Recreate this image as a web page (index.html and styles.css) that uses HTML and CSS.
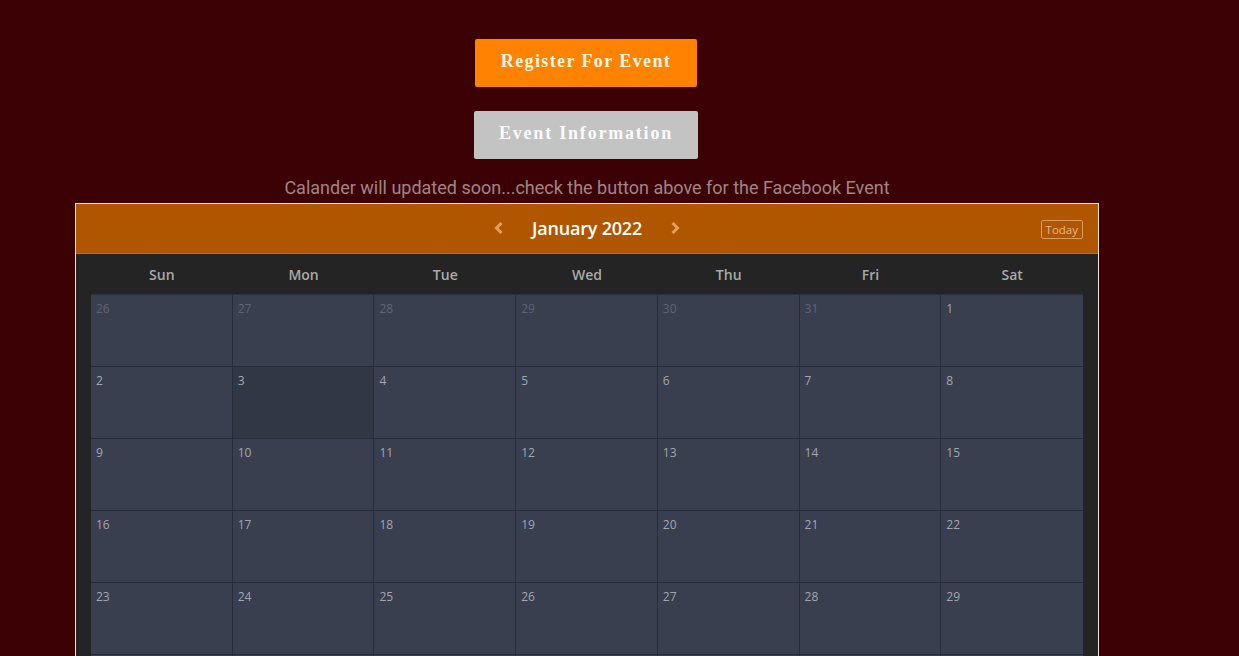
FILE: index.html
```html
<!DOCTYPE html>
<html>
<head>
<meta charset="utf-8">
<link rel="stylesheet" href="styles.css">
</head>
<body>
<div class="page">
  <div class="actions">
    <a class="btn btn-register">Register For Event</a>
    <a class="btn btn-info">Event Information</a>
  </div>
  <p class="note">Calander will updated soon...check the button above for the Facebook Event</p>
  <div class="calendar">
    <div class="cal-head">
      <div class="nav">
        <span class="arrow"><svg width="10" height="14" viewBox="0 0 10 14"><polyline points="7.5,2 2.5,7 7.5,12" fill="none" stroke="currentColor" stroke-width="3"/></svg></span>
        <span class="month">January 2022</span>
        <span class="arrow"><svg width="10" height="14" viewBox="0 0 10 14"><polyline points="2.5,2 7.5,7 2.5,12" fill="none" stroke="currentColor" stroke-width="3"/></svg></span>
      </div>
      <span class="today">Today</span>
    </div>
    <div class="cal-body">
      <div class="dow"><span>Sun</span><span>Mon</span><span>Tue</span><span>Wed</span><span>Thu</span><span>Fri</span><span>Sat</span></div>
      <div class="grid">
        <div class="cell other">26</div><div class="cell other">27</div><div class="cell other">28</div><div class="cell other">29</div><div class="cell other">30</div><div class="cell other">31</div><div class="cell">1</div>
        <div class="cell">2</div><div class="cell current">3</div><div class="cell">4</div><div class="cell">5</div><div class="cell">6</div><div class="cell">7</div><div class="cell">8</div>
        <div class="cell">9</div><div class="cell">10</div><div class="cell">11</div><div class="cell">12</div><div class="cell">13</div><div class="cell">14</div><div class="cell">15</div>
        <div class="cell">16</div><div class="cell">17</div><div class="cell">18</div><div class="cell">19</div><div class="cell">20</div><div class="cell">21</div><div class="cell">22</div>
        <div class="cell">23</div><div class="cell">24</div><div class="cell">25</div><div class="cell">26</div><div class="cell">27</div><div class="cell">28</div><div class="cell">29</div>
        <div class="cell">30</div><div class="cell">31</div><div class="cell other">1</div><div class="cell other">2</div><div class="cell other">3</div><div class="cell other">4</div><div class="cell other">5</div>
      </div>
    </div>
  </div>
</div>
</body>
</html>
```

FILE: styles.css
```css
html, body {
  margin: 0;
  padding: 0;
  background: #3b0104;
}
body {
  font-family: "Open Sans", sans-serif;
}
.page {
  width: 1024px;
  margin-left: 75px;
  padding-top: 39px;
}
.actions {
  display: flex;
  flex-direction: column;
  align-items: center;
  gap: 24px;
}
.btn {
  display: flex;
  align-items: center;
  justify-content: center;
  height: 48px;
  border-radius: 2px;
  font-family: "Liberation Serif", serif;
  font-weight: bold;
  font-size: 18px;
  letter-spacing: 1.4px;
  color: #fff7ea;
  box-sizing: border-box;
  padding-bottom: 3px;
}
.btn-register {
  width: 222px;
  margin-right: 2px;
  background: #ff8300;
}
.btn-info {
  width: 224px;
  margin-right: 2px;
  background: #c3c3c3;
  color: #fbfbfb;
  letter-spacing: 1.8px;
}
.note {
  margin: 18px 0 4px;
  text-align: center;
  font-family: Roboto, sans-serif;
  font-size: 18px;
  line-height: 22px;
  color: #a08486;
}
.calendar {
  border: 1px solid #f3e6dc;
  border-bottom: none;
}
.cal-head {
  position: relative;
  height: 49px;
  background: #b05600;
  border-bottom: 1px solid #c46a1c;
  display: flex;
  align-items: center;
  justify-content: center;
}
.nav {
  display: flex;
  align-items: center;
  gap: 28px;
  padding-bottom: 2px;
}
.arrow {
  color: #e0a064;
  display: flex;
}
.month {
  font-weight: 600;
  font-size: 18px;
  color: #ffffff;
  letter-spacing: -0.2px;
}
.today {
  position: absolute;
  right: 15px;
  top: 16px;
  height: 17px;
  padding: 0 4px;
  border: 1px solid #d99a60;
  border-radius: 2px;
  font-size: 11.5px;
  line-height: 17px;
  color: #eab68a;
}
.cal-body {
  background: #242424;
  padding: 0 15px;
}
.dow {
  display: grid;
  grid-template-columns: repeat(7, 1fr);
  height: 40px;
  align-items: center;
}
.dow span {
  text-align: center;
  font-weight: 600;
  font-size: 14px;
  color: #a9a9a9;
}
.grid {
  display: grid;
  grid-template-columns: repeat(7, 1fr);
  grid-auto-rows: 72px;
  background: #393f4f;
  border-top: 1px solid #2c3140;
}
.cell {
  border-right: 1px solid #272c3a;
  border-bottom: 1px solid #272c3a;
  padding: 6px 5px;
  font-size: 12px;
  line-height: 16px;
  color: #a3a6ae;
  box-sizing: border-box;
}
.cell:nth-child(7n) {
  border-right: none;
}
.cell.other {
  color: #5f6575;
}
.cell.current {
  background: #323745;
}
```
